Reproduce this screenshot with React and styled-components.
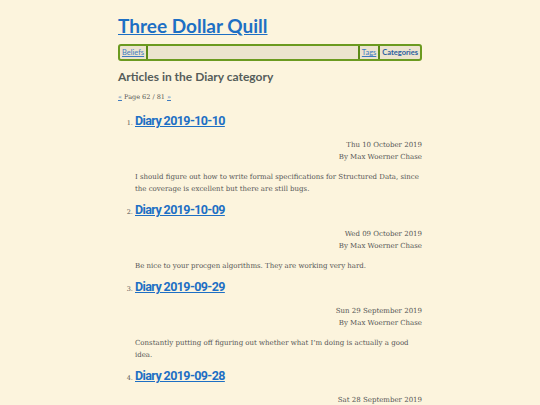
import styled, { createGlobalStyle } from "styled-components";

const Global = createGlobalStyle`
  html, body {
    margin: 0;
    padding: 0;
    background: #fcf4dd;
  }
  body {
    font-family: "DejaVu Serif", serif;
    color: #555;
  }
`;

const Page = styled.div`
  width: 304px;
  margin: 0 auto;
  padding-top: 15px;
`;

const SiteTitle = styled.h1`
  margin: 0;
  font-family: Lato, "Open Sans", sans-serif;
  font-size: 19px;
  line-height: 22px;
  font-weight: 700;
  a {
    color: #1d6fc4;
  }
`;

const Nav = styled.nav`
  display: flex;
  margin-top: 7px;
  height: 13px;
  border: 2px solid #6b9a20;
  border-radius: 3px;
  background: #ece4cf;
  font-family: "Liberation Sans Narrow", Lato, sans-serif;
  font-size: 7.5px;
  line-height: 13px;
`;

const NavItem = styled.a`
  padding: 0 2px;
  font-weight: ${(p) => (p.$current ? 700 : 400)};
  text-decoration: ${(p) => (p.$current ? "none" : "underline")};
  color: ${(p) => (p.$current ? "#2b5e9e" : "#3f7bbf")};
  border-right: ${(p) => (p.$sepRight ? "2px solid #5b8a18" : "none")};
  border-left: ${(p) => (p.$sepLeft ? "2px solid #5b8a18" : "none")};
`;

const Spacer = styled.span`
  flex: 1;
`;

const SectionTitle = styled.h2`
  margin: 7px 0 0;
  font-family: Lato, "Open Sans", sans-serif;
  font-size: 12px;
  line-height: 18px;
  font-weight: 700;
  color: #555d5a;
`;

const Pager = styled.p`
  margin: 6px 0 0;
  font-size: 6.5px;
  line-height: 10px;
  a {
    color: #3f7bbf;
  }
`;

const List = styled.ol`
  margin: 9px 0 0;
  padding-left: 17px;
  font-size: 6.5px;
`;

const Item = styled.li`
  margin-bottom: 5px;
`;

const ItemTitle = styled.h3`
  display: inline;
  font-family: Roboto, Lato, sans-serif;
  font-size: 12.5px;
  letter-spacing: -0.6px;
  line-height: 20px;
  font-weight: 700;
  a {
    color: #1d6fc4;
  }
`;

const Meta = styled.div`
  margin-top: 8px;
  text-align: right;
  font-size: 7px;
  line-height: 12px;
`;

const Summary = styled.p`
  margin: 8px 0 0;
  font-size: 7px;
  line-height: 12px;
`;

const articles = [
  {
    title: "Diary 2019-10-10",
    date: "Thu 10 October 2019",
    text: "I should figure out how to write formal specifications for Structured Data, since the coverage is excellent but there are still bugs.",
  },
  {
    title: "Diary 2019-10-09",
    date: "Wed 09 October 2019",
    text: "Be nice to your procgen algorithms. They are working very hard.",
  },
  {
    title: "Diary 2019-09-29",
    date: "Sun 29 September 2019",
    text: "Constantly putting off figuring out whether what I\u2019m doing is actually a good idea.",
  },
  {
    title: "Diary 2019-09-28",
    date: "Sat 28 September 2019",
    text: "",
  },
];

export default function App() {
  return (
    <>
      <Global />
      <Page>
        <SiteTitle>
          <a href="#">Three Dollar Quill</a>
        </SiteTitle>
        <Nav>
          <NavItem href="#" $sepRight>Beliefs</NavItem>
          <Spacer />
          <NavItem href="#" $sepLeft $sepRight>Tags</NavItem>
          <NavItem href="#" $current>Categories</NavItem>
        </Nav>
        <SectionTitle>Articles in the Diary category</SectionTitle>
        <Pager>
          <a href="#">«</a> Page 62 / 81 <a href="#">»</a>
        </Pager>
        <List>
          {articles.map((a) => (
            <Item key={a.title}>
              <ItemTitle>
                <a href="#">{a.title}</a>
              </ItemTitle>
              <Meta>
                {a.date}
                <br />
                By Max Woerner Chase
              </Meta>
              {a.text && <Summary>{a.text}</Summary>}
            </Item>
          ))}
        </List>
      </Page>
    </>
  );
}
